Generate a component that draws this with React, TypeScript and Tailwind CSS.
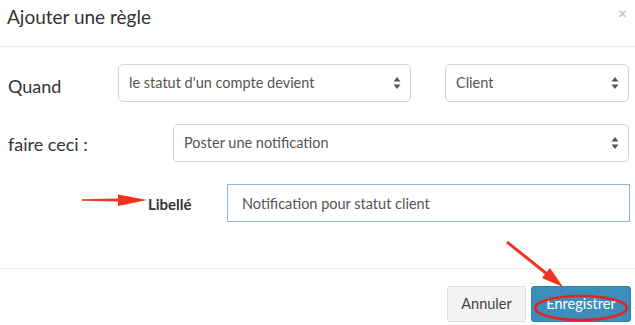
import React from 'react'

const font = { fontFamily: 'Lato, "Open Sans", sans-serif' }

function Arrows() {
  return (
    <svg className="w-2.5 h-4 shrink-0" viewBox="0 0 10 16">
      <path d="M5 2 L8.5 6.5 H1.5 Z" fill="#555" />
      <path d="M5 14 L8.5 9.5 H1.5 Z" fill="#555" />
    </svg>
  )
}

function FakeSelect({ value, className }: { value: string; className: string }) {
  return (
    <div
      className={`h-[38px] flex items-center justify-between border border-[#d2d2d2] rounded-[5px] bg-white pl-[10px] pr-[8px] text-[14.5px] text-[#555] ${className}`}
    >
      <span>{value}</span>
      <Arrows />
    </div>
  )
}

export default function App() {
  return (
    <div className="relative w-[635px] h-[325px] bg-white overflow-hidden" style={font}>
      {/* en-tête */}
      <div className="h-[47px] border-b border-[#e8e8e8] flex items-start justify-between pl-[7px] pr-[8px]">
        <h4 className="text-[19px] text-[#333] mt-[4px] leading-[26px]">Ajouter une règle</h4>
        <span className="text-[#c4c4c4] text-[15px] font-bold mt-[3px] leading-[20px]">×</span>
      </div>

      {/* corps */}
      <div className="h-[222px] border-b border-[#eeeeee]">
        <div className="flex items-center pt-[17px]">
          <label className="w-[118px] pl-[8px] text-[18px] text-[#333] mt-[6px]">Quand</label>
          <FakeSelect value="le statut d'un compte devient" className="w-[293px]" />
          <FakeSelect value="Client" className="w-[184px] ml-[34px]" />
        </div>
        <div className="flex items-center mt-[22px]">
          <label className="w-[173px] pl-[8px] text-[18px] text-[#333] mt-[2px]">faire ceci :</label>
          <FakeSelect value="Poster une notification" className="w-[456px]" />
        </div>
        <div className="flex items-center mt-[22px]">
          <label className="w-[227px] pl-[148px] text-[15px] font-bold text-[#333] mt-[2px]">Libellé</label>
          <input
            readOnly
            value="Notification pour statut client"
            className="w-[403px] h-[38px] border border-[#8fb5dc] px-[14px] text-[14.5px] text-[#555] outline-none"
            style={font}
          />
        </div>
      </div>

      {/* pied */}
      <div className="flex justify-end gap-[5px] pt-[17px] pr-[4px]">
        <button className="h-[36px] w-[79px] bg-[#f4f4f4] border border-[#dddddd] rounded-[3px] text-[14.5px] text-[#444]">
          Annuler
        </button>
        <button className="h-[36px] w-[100px] bg-[#3c8dbc] border border-[#367fa9] rounded-[3px] text-[14.5px] text-white">
          Enregistrer
        </button>
      </div>

      {/* annotations */}
      <svg className="absolute inset-0 pointer-events-none" width="635" height="325">
        <path d="M82 199.2 L120 198.6 L120 201.4 L82 200.8 Z" fill="#f0321e" />
        <polygon points="118,194.5 147,200 118,206" fill="#f0321e" />
        <line x1="507" y1="242" x2="547" y2="274" stroke="#f0321e" strokeWidth="3" />
        <polygon points="550,268 542,278 563,287" fill="#f0321e" />
        <ellipse cx="581" cy="308" rx="46" ry="12" fill="none" stroke="#e8221a" strokeWidth="2.5" />
      </svg>
    </div>
  )
}
